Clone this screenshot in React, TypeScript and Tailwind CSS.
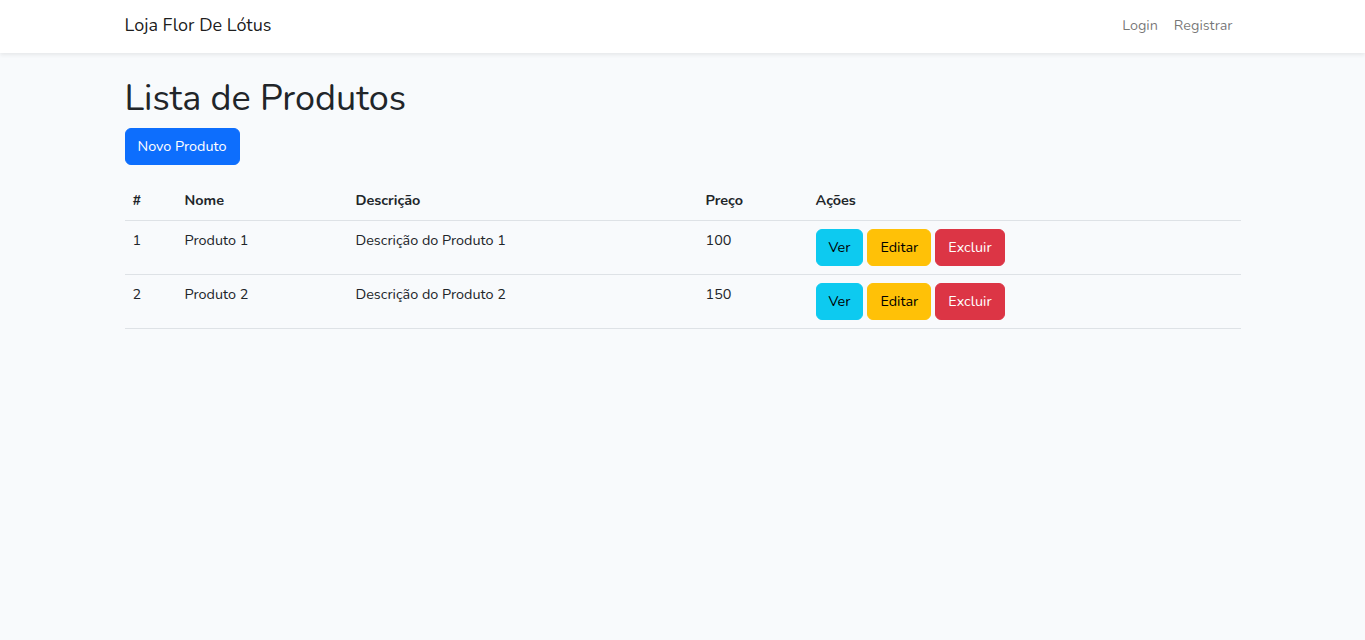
const produtos = [
  { id: 1, nome: 'Produto 1', descricao: 'Descrição do Produto 1', preco: 100 },
  { id: 2, nome: 'Produto 2', descricao: 'Descrição do Produto 2', preco: 150 },
];

function Navbar() {
  return (
    <nav className="bg-white shadow-[0_2px_4px_rgba(0,0,0,0.075)] relative">
      <div className="w-[1140px] mx-auto px-3 h-[53px] pb-[2px] flex items-center justify-between">
        <span className="text-[18px] text-black/90 leading-[27px]">Loja Flor De Lótus</span>
        <div className="flex items-center">
          <a className="px-2 text-black/55 text-[14.4px]">Login</a>
          <a className="px-2 text-black/55 text-[14.4px]">Registrar</a>
        </div>
      </div>
    </nav>
  );
}

export default function App() {
  return (
    <div
      className="min-h-[640px] bg-[#f8fafc] text-[#212529] text-[14.4px] leading-[1.6]"
      style={{ fontFamily: 'Nunito, Lato, "Open Sans", sans-serif' }}
    >
      <Navbar />
      <main className="py-6">
        <div className="w-[1140px] mx-auto px-3">
          <h1 className="text-[36px] leading-[1.2] font-normal mb-2">Lista de Produtos</h1>
          <button className="bg-[#0d6efd] text-white rounded-md px-3 py-[6px] border border-[#0d6efd] leading-[1.6]">
            Novo Produto
          </button>

          <table className="w-full mt-4 border-collapse">
            <thead>
              <tr className="border-b border-[#dee2e6]">
                <th className="w-[52px] p-2 text-left font-bold">#</th>
                <th className="w-[171px] p-2 text-left font-bold">Nome</th>
                <th className="w-[350px] p-2 text-left font-bold">Descrição</th>
                <th className="w-[110px] p-2 text-left font-bold">Preço</th>
                <th className="p-2 text-left font-bold">Ações</th>
              </tr>
            </thead>
            <tbody>
              {produtos.map(p => (
                <tr key={p.id} className="border-b border-[#dee2e6] align-top">
                  <td className="p-2">{p.id}</td>
                  <td className="p-2">{p.nome}</td>
                  <td className="p-2">{p.descricao}</td>
                  <td className="p-2">{p.preco}</td>
                  <td className="p-2">
                    <div className="flex gap-1">
                      <button className="bg-[#0dcaf0] border border-[#0dcaf0] text-black rounded-md px-3 py-[6px] leading-[1.6]">Ver</button>
                      <button className="bg-[#ffc107] border border-[#ffc107] text-black rounded-md px-3 py-[6px] leading-[1.6]">Editar</button>
                      <button className="bg-[#dc3545] border border-[#dc3545] text-white rounded-md px-3 py-[6px] leading-[1.6]">Excluir</button>
                    </div>
                  </td>
                </tr>
              ))}
            </tbody>
          </table>
        </div>
      </main>
    </div>
  );
}
